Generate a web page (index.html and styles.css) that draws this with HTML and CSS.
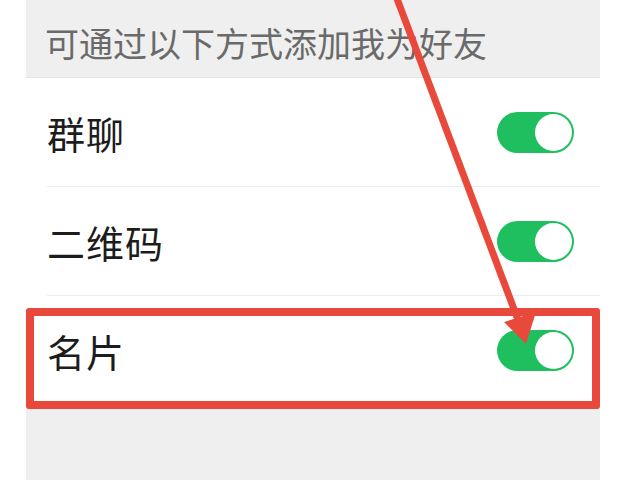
FILE: index.html
```html
<!DOCTYPE html>
<html lang="zh-CN">
<head>
  <meta charset="UTF-8" />
  <meta name="viewport" content="width=device-width, initial-scale=1" />
  <title>添加我的方式</title>
  <link rel="stylesheet" href="styles.css">
</head>
<body>
  <div class="panel">
    <div class="panel-header">可通过以下方式添加我为好友</div>
    <div class="row">
      <div class="row-inner">
        <span class="row-label">群聊</span>
        <span class="switch on"><span class="knob"></span></span>
      </div>
    </div>
    <div class="row">
      <div class="row-inner">
        <span class="row-label">二维码</span>
        <span class="switch on"><span class="knob"></span></span>
      </div>
    </div>
    <div class="row">
      <div class="row-inner last">
        <span class="row-label">名片</span>
        <span class="switch on"><span class="knob"></span></span>
      </div>
    </div>
    <div class="panel-footer"></div>
  </div>

  <!-- annotation layer -->
  <div class="highlight-box"></div>
  <svg class="arrow" width="640" height="480" viewBox="0 0 640 480">
    <line x1="396" y1="-4" x2="520" y2="325" stroke="#e8493b" stroke-width="7" />
    <polygon points="526,344 504,322 536,312" fill="#e8493b" />
  </svg>
</body>
</html>
```

FILE: styles.css
```css
body {
  margin: 0;
  padding: 0;
  background: #fff;
  font-family: "Noto Sans CJK SC", "Noto Sans", sans-serif;
  width: 640px;
  height: 480px;
  overflow: hidden;
  position: relative;
}
.panel {
  margin-left: 26px;
  width: 574px;
  height: 480px;
  display: flex;
  flex-direction: column;
  background: #efefef;
}
.panel-header {
  height: 78px;
  box-sizing: border-box;
  padding: 8px 0 0 19px;
  display: flex;
  align-items: center;
  font-size: 34px;
  color: #6a6a6a;
  border-bottom: 1px solid #e2e2e2;
}
.row {
  background: #fff;
  padding-left: 21px;
}
.row-inner {
  height: 108px;
  display: flex;
  align-items: center;
  justify-content: space-between;
  padding-right: 26px;
  border-bottom: 1px solid #ececec;
}
.row-inner.last {
  border-bottom: none;
}
.row-label {
  font-size: 38px;
  color: #1c1c1c;
  letter-spacing: 1px;
}
.switch {
  width: 77px;
  height: 41px;
  border-radius: 21px;
  background: #1fbf5f;
  position: relative;
  box-sizing: border-box;
}
.switch .knob {
  position: absolute;
  right: 2px;
  top: 2px;
  width: 37px;
  height: 37px;
  border-radius: 50%;
  background: #fff;
}
.panel-footer {
  flex: 1;
}
.highlight-box {
  position: absolute;
  left: 26px;
  top: 308px;
  width: 574px;
  height: 101px;
  box-sizing: border-box;
  border: 8px solid #e8493b;
  border-radius: 3px;
}
.arrow {
  position: absolute;
  left: 0;
  top: 0;
  pointer-events: none;
}
```
